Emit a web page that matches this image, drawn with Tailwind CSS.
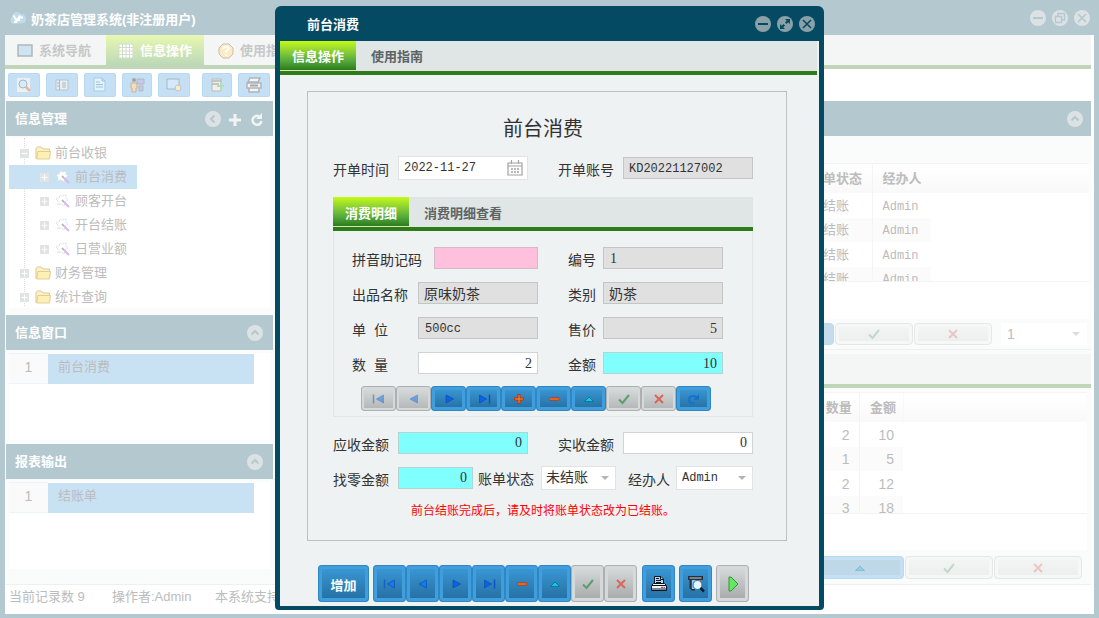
<!DOCTYPE html>
<html lang="zh-CN">
<head>
    <meta charset="UTF-8">
    <meta name="viewport" content="width=device-width, initial-scale=1.0">
    <title>奶茶店管理系统</title>
    <script src="https://cdn.jsdelivr.net/npm/@tailwindcss/browser@4"></script>
</head>
<body class="h-screen overflow-hidden bg-[#b4c8d0] font-['Liberation_Sans','Noto_Sans_CJK_SC',sans-serif] text-[13px] leading-5 text-[#333]">

    <!-- Icon sprite -->
    <svg class="hidden">
        <symbol id="i-min" viewBox="0 0 16 16"><circle cx="8" cy="8" r="8" fill="currentColor"/><path d="M3 8h10" class="stroke-(--hole)" stroke-width="2"/></symbol>
        <symbol id="i-max" viewBox="0 0 16 16"><circle cx="8" cy="8" r="8" fill="currentColor"/><path d="M4.500 11.500l7-7" class="stroke-(--hole)" stroke-width="2" stroke-dasharray="4 2"/><path d="M8 3h5v5zM3 8v5h5z" class="fill-(--hole)"/></symbol>
        <symbol id="i-restore" viewBox="0 0 16 16"><circle cx="8" cy="8" r="8" fill="currentColor"/><path d="M3.500 6.500h6v6h-6zM6 6V3.500h6.500v6.500H10" class="stroke-(--hole)" fill="none" stroke-width="1.400"/></symbol>
        <symbol id="i-close" viewBox="0 0 16 16"><circle cx="8" cy="8" r="8" fill="currentColor"/><path d="M4 4l8 8M12 4l-8 8" class="stroke-(--hole)" stroke-width="1.600"/></symbol>
        <symbol id="i-up" viewBox="0 0 16 16"><circle cx="8" cy="8" r="8" fill="currentColor"/><path d="M4.500 9.500L8 6l3.500 3.500" class="stroke-(--hole)" fill="none" stroke-width="2"/></symbol>
        <symbol id="i-left" viewBox="0 0 16 16"><circle cx="8" cy="8" r="8" fill="currentColor"/><path d="M9.500 4.500L6 8l3.500 3.500" class="stroke-(--hole)" fill="none" stroke-width="2"/></symbol>
        <symbol id="i-first" viewBox="0 0 14 12"><path d="M1.500 1.500v9" stroke="#1560c8" stroke-width="1.500"/><path d="M11.500 2v8L4.500 6z" fill="#1478f0" stroke="#0a50bc" stroke-width=".7"/></symbol>
        <symbol id="i-prev" viewBox="0 0 14 12"><path d="M10.500 2v8L3 6z" fill="#1478f0" stroke="#0a50bc" stroke-width=".7"/></symbol>
        <symbol id="i-next" viewBox="0 0 14 12"><path d="M4 2v8l7.500-4z" fill="#0c62e4" stroke="#0a4cb4" stroke-width=".7"/></symbol>
        <symbol id="i-last" viewBox="0 0 14 12"><path d="M12.500 1.500v9" stroke="#0c52c8" stroke-width="1.500"/><path d="M2.500 2v8l7-4z" fill="#0c62e4" stroke="#0a4cb4" stroke-width=".7"/></symbol>
        <symbol id="i-add" viewBox="0 0 14 12"><path d="M7 1v10M2 6h10" stroke="#c83204" stroke-width="3"/><path d="M7 2v8M3 6h8" stroke="#ff8a2a"/></symbol>
        <symbol id="i-del" viewBox="0 0 14 12"><path d="M2 6h10" stroke="#d42a00" stroke-width="3"/><path d="M2.500 6h9" stroke="#ff9a3a"/></symbol>
        <symbol id="i-edit" viewBox="0 0 14 12"><path d="M2.500 8.500L7 4l4.500 4.500z" fill="#10c8e0" stroke="#047c9c"/></symbol>
        <symbol id="i-ok" viewBox="0 0 14 12"><path d="M2 6.500l3.500 3.500L12 2" fill="none" stroke="#5a9e6e" stroke-width="2"/></symbol>
        <symbol id="i-no" viewBox="0 0 14 12"><path d="M3 2l8 8M11 2l-8 8" stroke="#d8665c" stroke-width="2"/></symbol>
        <symbol id="i-redo" viewBox="0 0 14 12"><path d="M7.500 10.500H5A3.800 3.800 0 0 1 5.500 3Q8 2.500 10 4.500" fill="none" stroke="#1272cc" stroke-width="2"/><path d="M12 1v6H6.500z" fill="#1272cc"/></symbol>
        <symbol id="i-print" viewBox="0 0 18 18"><path d="M4.500 9V1.500H11L13.500 4v5" fill="#b4dcf8" stroke="#0a1420"/><path d="M6 3.500h3M6 5.500h5M6 7.500h5M10.500 1.500V4.500h3" fill="none" stroke="#0a1420"/><path d="M3.500 8.500h11l2 2v5h-15v-5z" fill="#eef4fa" stroke="#0a1420"/><path d="M2 10.500h14M2 14h14" stroke="#0a1420" stroke-width="1.200"/><path d="M11 12.300h2" stroke="#e02020"/><path d="M13.500 12.300h1.500" stroke="#2060e0"/></symbol>
        <symbol id="i-preview" viewBox="0 0 18 18"><path d="M1 1h15v4H1z" fill="#26303a"/><path d="M2.500 3h12" stroke="#c8d8e4"/><path d="M3.500 5v9M4 14.500h4" stroke="#26303a" stroke-width="2"/><path d="M5 5h8v9H5z" fill="#8cc6ee"/><path d="M14 5v4" stroke="#c46038" stroke-width="2"/><circle cx="10.500" cy="10" r="4.500" fill="#e4f6ff" stroke="#2a6c9c"/><path d="M13.500 13l3.500 3.500" stroke="#0a1c30" stroke-width="2.500"/></symbol>
        <symbol id="i-run" viewBox="0 0 18 18"><path d="M5 2v14h2l7-7-7-7z" fill="#62e862" stroke="#3a9038"/></symbol>
        <symbol id="i-cal" viewBox="0 0 16 16"><path d="M1 3h14v12H1zM1 6h14M4.500 0v4M11.500 0v4" fill="none" stroke="#a2a2a2" stroke-width="1.200"/><path d="M4 9h2m1 0h2m1 0h2M4 12h2m1 0h2m1 0h2" stroke="#a2a2a2" stroke-width="1.500"/></symbol>
        <symbol id="i-caret" viewBox="0 0 10 6"><path d="M1 1h8L5 5z" fill="currentColor"/></symbol>
        <symbol id="i-folder" viewBox="0 0 16 14"><path d="M1 3l1.500-2h4L8 3h6.500v9.500H1z" fill="#fff3c4" stroke="#dcc690"/><path d="M3 5.500h12.500l-1 7.500H1.500z" fill="#fdf0b4" stroke="#e2cd94"/></symbol>
        <symbol id="i-wand" viewBox="0 0 16 16"><path d="M1 6l3-1 1-3 3 1 3-1v3l2 2-3 2-1 4-3-2-3 1 0-4z" fill="#fff" stroke="#dcdcdc" stroke-dasharray="2 1"/><path d="M7 7l2 2" stroke="#bbb" stroke-width="2"/><path d="M9 9l5 5" stroke="#ddb4f4" stroke-width="2"/></symbol>
        <symbol id="i-plus" viewBox="0 0 9 9"><path d="M0 0h9v9H0z" fill="#e2e4e4"/><path d="M1.500 4.500h6M4.500 1.500v6" stroke="#fff"/></symbol>
        <symbol id="i-minus" viewBox="0 0 9 9"><path d="M0 0h9v9H0z" fill="#e2e4e4"/><path d="M1.500 4.500h6" stroke="#fff"/></symbol>
    </svg>

    <!-- Main window -->
    <div class="flex h-full flex-col px-[5px] pb-1 [--hole:#b4c8d0]">
        <header class="flex h-[35px] shrink-0 items-center gap-1 pr-1 pl-1 font-bold text-white">
            <svg class="h-4 w-[18px]" viewBox="0 0 18 16"><path d="M4 14a4 4 0 0 1-1-7 5 5 0 0 1 9-3 5 5 0 0 1 3 9z" fill="#bedcea"/><path d="M4.500 5.500l3 5M11 5.500L7 12H5M10 8v3M11 7.500h3" fill="none" stroke="#fff" stroke-width="2"/></svg>
            <h1 class="grow pt-1">奶茶店管理系统(非注册用户)</h1>
            <div class="flex gap-1.5 text-[#dce2e4]">
                <button aria-label="最小化"><svg class="size-4"><use href="#i-min"/></svg></button>
                <button aria-label="还原"><svg class="size-4"><use href="#i-restore"/></svg></button>
                <button aria-label="关闭"><svg class="size-4"><use href="#i-close"/></svg></button>
            </div>
        </header>

        <div class="flex min-h-0 grow flex-col bg-white pr-[3px]">
            <nav class="flex h-[34px] shrink-0 border-b-4 border-[#c0d6b8] bg-[#f4f6f6] font-bold text-[#c6c8c8]">
                <button class="flex w-[101px] items-center gap-1.5 pt-0.5 pl-3"><svg class="h-4 w-[16px]" viewBox="0 0 16 16"><path d="M1 2h14v11H1z" fill="#cfe4f2" stroke="#b0b6ba" stroke-width="1.500"/></svg>系统导航</button>
                <button class="flex w-[98px] items-center gap-1.5 bg-linear-to-b from-[#e8f8b0] to-[#bcd8b8] pt-0.5 pl-3 text-white"><svg class="size-4" viewBox="0 0 16 16"><path d="M1 1h14v14H1z" fill="#fff"/><path d="M1 4.500h14M1 8h14M1 11.500h14M4.500 1v14M8 1v14M11.500 1v14M1 1h14v14H1z" fill="none" stroke="#d2dccc"/></svg>信息操作</button>
                <button class="flex items-center gap-1.5 pt-0.5 pl-3.5"><svg class="size-4" viewBox="0 0 16 16"><path d="M5 1h6l4 4v6l-4 4H5l-4-4V5z" fill="#fcecc4" stroke="#c8bcb0"/><path d="M5.500 6q0-2.500 2.500-2.500T10.500 6Q10 7.500 8 8v2M8 11.500v1.500" fill="none" stroke="#fff" stroke-width="2"/></svg>使用指南</button>
            </nav>

            <div class="flex h-8 shrink-0 items-center gap-1.5 pl-[3px]">
                <button aria-label="查询" class="flex h-6 w-8 items-center justify-center rounded-xs border border-[#b8daf0] bg-[#c5e0f4]"><svg class="size-4" viewBox="0 0 16 16"><path d="M1 1h13v14H1z" fill="#eef0ee"/><circle cx="7" cy="7" r="4" fill="#d4ecfc" stroke="#a6b6c0"/><path d="M10 10l4 4" stroke="#e8b898" stroke-width="2.500"/></svg></button>
                <button aria-label="列表" class="flex h-6 w-8 items-center justify-center rounded-xs border border-[#b8daf0] bg-[#c5e0f4]"><svg class="size-4" viewBox="0 0 16 16"><path d="M2 3h12v10H2z" fill="#e8eef2" stroke="#b4c2cc"/><path d="M5.500 3v10M8 6h4M8 8h4M8 10h4M3 6h2M3 9h2" stroke="#a8bac8"/></svg></button>
                <button aria-label="文档" class="flex h-6 w-8 items-center justify-center rounded-xs border border-[#b8daf0] bg-[#c5e0f4]"><svg class="size-4" viewBox="0 0 16 16"><path d="M2 1h8l3 3v10H2z" fill="#e4f2fc" stroke="#a8cce4"/><path d="M4 5h4M4 7.500h7M4 10h7M10 1v3h3" fill="none" stroke="#9cc0dc"/></svg></button>
                <button aria-label="用户" class="flex h-6 w-[30px] items-center justify-center rounded-xs border border-[#b8daf0] bg-[#c5e0f4]"><svg class="size-4" viewBox="0 0 16 16"><circle cx="5" cy="3" r="2" fill="#a8a49c"/><path d="M2 6h6v5H7v4H3v-4H2z" fill="#f4dcbc" stroke="#c4b49c"/><path d="M8 2h7v5H8zM10 9h4v5h-4z" fill="#c8c8ec" stroke="#b4b8bc"/></svg></button>
                <button aria-label="窗口" class="flex h-6 w-8 items-center justify-center rounded-xs border border-[#b8daf0] bg-[#c5e0f4]"><svg class="size-4" viewBox="0 0 16 16"><path d="M1 2h12v10H1z" fill="#d4eafa" stroke="#a8b8c0"/><circle cx="12" cy="11" r="3" fill="#f0f0c4" stroke="#d0b8d8"/></svg></button>
                <button aria-label="导出" class="ml-1.5 flex h-6 w-[30px] items-center justify-center rounded-xs border border-[#b8daf0] bg-[#c5e0f4]"><svg class="size-4" viewBox="0 0 16 16"><path d="M3 2h9v12H3z" fill="#f0f0ea" stroke="#b8bcb8"/><path d="M3 4h9M3 7h7" stroke="#b4b8b4" stroke-width="1.500"/><path d="M8 9h7M12 6v6" stroke="#b4dcb4" stroke-width="2"/></svg></button>
                <button aria-label="打印" class="flex h-6 w-8 items-center justify-center rounded-xs border border-[#b8daf0] bg-[#c5e0f4]"><svg class="size-4" viewBox="0 0 16 16"><path d="M4 1h10l-2 4H2zM1 6h14v5H1zM3 11h10v4H3z" fill="#f4f4f4" stroke="#b0b4b8" stroke-width="1.500"/><path d="M4 8.500h8" stroke="#a4a8ac" stroke-width="2"/></svg></button>
            </div>

            <div class="flex min-h-0 grow bg-[#fafcfc]">
                <!-- Left panels -->
                <aside class="flex w-[268px] shrink-0 flex-col pl-px text-[#bcbcbc]">
                    <h2 class="flex h-[35px] items-center gap-1.5 bg-[#b4c8d0] pr-2 pl-[9px] font-bold text-white">
                        <span class="grow">信息管理</span>
                        <button aria-label="收起" class="text-[#dce2e4]"><svg class="size-4"><use href="#i-left"/></svg></button>
                        <button aria-label="展开全部"><svg class="size-4" viewBox="0 0 16 16"><path d="M8 3v12M2 9h12" stroke="#f0f4f4" stroke-width="3"/></svg></button>
                        <button aria-label="刷新"><svg class="size-4" viewBox="0 0 16 16"><path d="M10.500 5.500A4.500 4.500 0 1 0 12.500 10" fill="none" stroke="#f0f4f4" stroke-width="2.500"/><path d="M13 2v6H7z" fill="#f0f4f4"/></svg></button>
                    </h2>
                    <ul class="relative mx-[3px] mt-0.5 h-[170px] bg-white pt-[3px] *:h-6">
                        <li class="absolute top-0 left-[15px] h-[168px]! border-l border-dotted border-[#dcdcdc]"></li>
                        <li class="relative flex items-center pl-[11px]"><svg class="mr-1.5 size-[9px]"><use href="#i-minus"/></svg><svg class="mr-1 h-[14px] w-4"><use href="#i-folder"/></svg>前台收银</li>
                        <li class="relative flex w-32 items-center bg-[#c8e2f4] pl-[31px]"><svg class="mr-1.5 size-[9px]"><use href="#i-plus"/></svg><svg class="mr-1 size-4"><use href="#i-wand"/></svg>前台消费</li>
                        <li class="flex items-center pl-[31px]"><svg class="mr-1.5 size-[9px]"><use href="#i-plus"/></svg><svg class="mr-1 size-4"><use href="#i-wand"/></svg>顾客开台</li>
                        <li class="flex items-center pl-[31px]"><svg class="mr-1.5 size-[9px]"><use href="#i-plus"/></svg><svg class="mr-1 size-4"><use href="#i-wand"/></svg>开台结账</li>
                        <li class="flex items-center pl-[31px]"><svg class="mr-1.5 size-[9px]"><use href="#i-plus"/></svg><svg class="mr-1 size-4"><use href="#i-wand"/></svg>日营业额</li>
                        <li class="relative flex items-center pl-[11px]"><svg class="mr-1.5 size-[9px]"><use href="#i-plus"/></svg><svg class="mr-1 h-[14px] w-4"><use href="#i-folder"/></svg>财务管理</li>
                        <li class="relative flex items-center pl-[11px]"><svg class="mr-1.5 size-[9px]"><use href="#i-plus"/></svg><svg class="mr-1 h-[14px] w-4"><use href="#i-folder"/></svg>统计查询</li>
                    </ul>

                    <h2 class="mt-[7px] flex h-[35px] items-center justify-between bg-[#b4c8d0] pr-[10px] pl-[9px] font-bold text-white">信息窗口<button aria-label="折叠" class="text-[#dce2e4]"><svg class="size-4"><use href="#i-up"/></svg></button></h2>
                    <div class="mx-[3px] mt-[3px] h-[87px] bg-white">
                        <table class="h-[31px]"><tbody><tr><td class="w-[39px] border-y border-[#ecf4fa] bg-[#fafafa] pb-1 text-center text-[14px]">1</td><td class="w-[206px] bg-[#c8e2f4] pb-1 pl-2.5">前台消费</td></tr></tbody></table>
                    </div>

                    <h2 class="mt-1 flex h-[35px] items-center justify-between bg-[#b4c8d0] pr-[10px] pl-[9px] font-bold text-white">报表输出<button aria-label="折叠" class="text-[#dce2e4]"><svg class="size-4"><use href="#i-up"/></svg></button></h2>
                    <div class="mx-[3px] mt-[3px] h-[87px] bg-white">
                        <table class="h-[31px]"><tbody><tr><td class="w-[39px] border-y border-[#ecf4fa] bg-[#fafafa] pb-1 text-center text-[14px]">1</td><td class="w-[206px] bg-[#c8e2f4] pb-1 pl-2.5">结账单</td></tr></tbody></table>
                    </div>
                </aside>

                <!-- Right side: bill list and detail list -->
                <main class="ml-[5px] flex min-w-0 grow flex-col text-[#bcbcbc]">
                    <div class="flex h-[35px] shrink-0 items-center justify-end bg-[#b4c8d0] pr-2"><button aria-label="折叠" class="text-[#dce2e4]"><svg class="size-4"><use href="#i-up"/></svg></button></div>
                    <div class="mt-[27px] mr-0.5 h-[156px] shrink-0 bg-white">
                        <div class="h-[119px] overflow-hidden border-y border-[#f2f4f4]">
                            <table class="w-full bg-[linear-gradient(#fff,#f9f9f9_29px,#fff_29px)] text-left">
                                <thead><tr class="h-[29px]"><th class="w-[522px]"></th><th class="w-[72px] border-r border-[#f4f4f4] pl-2.5 whitespace-nowrap">账单状态</th><th class="w-[59px] pl-2.5 whitespace-nowrap">经办人</th><th></th></tr></thead>
                                <tbody class="*:odd:h-[25px] *:even:h-6 *:even:bg-[#fbfbfb]">
                                    <tr><td></td><td class="border-r border-[#f4f4f4] pl-2.5">已结账</td><td class="pt-0.5 pl-2.5 font-['Liberation_Mono',monospace] text-[12px]">Admin</td><td class="bg-white"></td></tr>
                                    <tr><td></td><td class="border-r border-[#f4f4f4] pl-2.5">已结账</td><td class="pt-0.5 pl-2.5 font-['Liberation_Mono',monospace] text-[12px]">Admin</td><td class="bg-white"></td></tr>
                                    <tr><td></td><td class="border-r border-[#f4f4f4] pl-2.5">已结账</td><td class="pt-0.5 pl-2.5 font-['Liberation_Mono',monospace] text-[12px]">Admin</td><td class="bg-white"></td></tr>
                                    <tr><td></td><td class="border-r border-[#f4f4f4] pl-2.5">已结账</td><td class="pt-0.5 pl-2.5 font-['Liberation_Mono',monospace] text-[12px]">Admin</td><td class="bg-white"></td></tr>
                                </tbody>
                            </table>
                        </div>
                    </div>
                    <div class="flex h-[31px] shrink-0 items-center justify-end gap-px border-b border-[#eef0f0] pr-1">
                        <button aria-label="编辑" class="h-[22px] w-20 rounded-sm border border-[#b8daf0] bg-[#c4dcec]"></button>
                        <button aria-label="保存" class="flex h-[22px] w-[78px] items-center justify-center rounded-sm border border-[#e4e8e8] bg-linear-to-b from-[#f4f6f6] to-[#eceeee] inset-ring-3 inset-ring-[#f6f8f8]"><svg class="h-3 w-3.5 opacity-30"><use href="#i-ok"/></svg></button>
                        <button aria-label="取消" class="flex h-[22px] w-[78px] items-center justify-center rounded-sm border border-[#e4e8e8] bg-linear-to-b from-[#f4f6f6] to-[#eceeee] inset-ring-3 inset-ring-[#f6f8f8]"><svg class="h-3 w-3.5 opacity-30"><use href="#i-no"/></svg></button>
                        <div class="relative ml-2 h-[22px] w-[86px] bg-white">
                            <select aria-label="页码" class="h-full w-full appearance-none pl-1.5 text-[14px]"><option>1</option></select>
                            <svg class="pointer-events-none absolute top-2 right-1.5 h-1.5 w-2.5 text-[#dcdcdc]"><use href="#i-caret"/></svg>
                        </div>
                    </div>
                    <div class="mt-1 h-[34px] shrink-0 border-b-4 border-[#c0d6b8] bg-[#f4f6f6]"></div>
                    <div class="mt-1 mr-1 h-[158px] shrink-0 bg-white">
                        <div class="h-[122px] overflow-hidden border-y border-[#f2f4f4]">
                            <table class="w-full bg-[linear-gradient(#fff,#f9f9f9_29px,#fff_29px)] text-[14px]">
                                <thead><tr class="h-[29px] text-[13px]"><th class="w-[537px]"></th><th class="w-11 border-r border-[#f4f4f4] pl-1 whitespace-nowrap">数量</th><th class="w-11 border-r border-[#f8f8f8] pl-1 whitespace-nowrap">金额</th><th></th></tr></thead>
                                <tbody class="*:odd:h-[25px] *:even:h-6 *:even:bg-[#fbfbfb]">
                                    <tr><td></td><td class="border-r border-[#f4f4f4] pr-[9px] text-right">2</td><td class="pr-[9px] text-right">10</td><td class="bg-white"></td></tr>
                                    <tr><td></td><td class="border-r border-[#f4f4f4] pr-[9px] text-right">1</td><td class="pr-[9px] text-right">5</td><td class="bg-white"></td></tr>
                                    <tr><td></td><td class="border-r border-[#f4f4f4] pr-[9px] text-right">2</td><td class="pr-[9px] text-right">12</td><td class="bg-white"></td></tr>
                                    <tr><td></td><td class="border-r border-[#f4f4f4] pr-[9px] text-right">3</td><td class="pr-[9px] text-right">18</td><td class="bg-white"></td></tr>
                                </tbody>
                            </table>
                        </div>
                    </div>
                    <div class="flex grow items-center justify-end gap-px pt-px pr-[9px]">
                        <button aria-label="编辑" class="flex h-[23px] w-[88px] items-center justify-center rounded-sm border border-[#b8daf0] bg-[#bfd8e8] inset-ring-3 inset-ring-[#c5e0f4]"><svg class="h-3 w-3.5 opacity-30"><use href="#i-edit"/></svg></button>
                        <button aria-label="保存" class="flex h-[23px] w-[88px] items-center justify-center rounded-sm border border-[#e4e8e8] bg-linear-to-b from-[#f4f6f6] to-[#eceeee] inset-ring-3 inset-ring-[#f6f8f8]"><svg class="h-3 w-3.5 opacity-30"><use href="#i-ok"/></svg></button>
                        <button aria-label="取消" class="flex h-[23px] w-[88px] items-center justify-center rounded-sm border border-[#e4e8e8] bg-linear-to-b from-[#f4f6f6] to-[#eceeee] inset-ring-3 inset-ring-[#f6f8f8]"><svg class="h-3 w-3.5 opacity-30"><use href="#i-no"/></svg></button>
                    </div>
                </main>
            </div>

            <footer class="flex h-[30px] shrink-0 border-t border-[#eef0f0] pt-0.5 pl-1 whitespace-nowrap text-[#bcbcbc]">
                <span class="w-[103px]">当前记录数 9</span>
                <span class="w-[103px]">操作者:Admin</span>
                <span>本系统支持</span>
            </footer>
        </div>
    </div>

    <!-- Dialog -->
    <div class="absolute inset-0 flex items-start justify-center pt-1.5 [--hole:#054a63]">
        <section class="flex w-[549px] flex-col rounded-t-md rounded-b-sm bg-[#054a63] px-[5px] pb-1">
            <header class="flex h-[35px] items-center gap-1.5 pr-1 pl-[27px] font-bold text-white">
                <h2 class="grow pt-0.5">前台消费</h2>
                <button aria-label="最小化" class="text-[#8ba1a8]"><svg class="size-4"><use href="#i-min"/></svg></button>
                <button aria-label="最大化" class="text-[#8ba1a8]"><svg class="size-4"><use href="#i-max"/></svg></button>
                <button aria-label="关闭" class="text-[#8ba1a8]"><svg class="size-4"><use href="#i-close"/></svg></button>
            </header>

            <div class="bg-[#eef2f3] pr-0.5 pb-1">
                <nav class="flex h-[34px] border-b-4 border-[#2d7b1a] bg-[#e0e5e5] font-bold text-[#5c6464]">
                    <button class="w-[76px] border-b border-[#d8e8b0] bg-linear-to-b from-[#c4fa10] via-[#52a83c] via-70% to-[#2d7b1a] pt-0.5 text-white">信息操作</button>
                    <button class="px-[15px] pt-0.5">使用指南</button>
                </nav>

                <form class="mt-4 mr-[30px] ml-[27px] border border-[#bcc0c2] pr-[33px] pb-[18px] pl-[25px] font-['Liberation_Mono','Noto_Sans_CJK_SC',monospace] text-[14px]">
                    <h3 class="mt-6 mb-[11px] text-center text-[20px] leading-[30px]">前台消费</h3>

                    <div class="flex h-[22px] items-center">
                        <label for="bill-date" class="w-[65px] pt-1.5">开单时间</label>
                        <div class="flex h-6 w-[130px] items-center border border-[#e2e4e4] bg-white pr-1">
                            <input id="bill-date" value="2022-11-27" class="min-w-0 grow pl-[5px] text-[12px] outline-none">
                            <svg class="size-4 shrink-0"><use href="#i-cal"/></svg>
                        </div>
                        <label for="bill-no" class="ml-auto pt-1.5 pr-[9px]">开单账号</label>
                        <input id="bill-no" readonly value="KD20221127002" class="h-[22px] w-[130px] border border-[#c4c6c6] bg-[#e0e0e0] pt-0.5 pl-[5px] text-[12px]">
                    </div>

                    <div class="mt-[18px]">
                        <div class="flex h-[34px] border-b-4 border-[#2d7b1a] bg-[#e0e5e5] font-['Noto_Sans_CJK_SC',sans-serif] text-[13px] font-bold text-[#5c6464]">
                            <button type="button" class="w-[76px] border-b border-[#d8e8b0] bg-linear-to-b from-[#c4fa10] via-[#52a83c] via-70% to-[#2d7b1a] pt-0.5 text-white">消费明细</button>
                            <button type="button" class="px-[15px] pt-0.5">消费明细查看</button>
                        </div>
                        <div class="border border-t-0 border-[#e2e6e7] pt-4 pb-[5px]">
                            <div class="grid grid-cols-[186px_155px] gap-x-[30px] gap-y-[13px] pl-[18px] *:flex *:h-[22px] *:items-center *:justify-between">
                                <div><label for="code" class="pt-1.5">拼音助记码</label><input id="code" class="h-[22px] w-[104px] border border-[#d8b8c8] bg-[#ffc0de] px-1.5 text-[12px]"></div>
                                <div><label for="no" class="pt-1.5">编号</label><input id="no" readonly value="1" class="h-[22px] w-[120px] border border-[#c4c6c6] bg-[#e0e0e0] px-1.5 pt-0.5 font-['Liberation_Serif',serif]"></div>
                                <div><label for="name" class="pt-1.5">出品名称</label><input id="name" readonly value="原味奶茶" class="h-[22px] w-[120px] border border-[#c4c6c6] bg-[#e0e0e0] px-[5px]"></div>
                                <div><label for="kind" class="pt-1.5">类别</label><input id="kind" readonly value="奶茶" class="h-[22px] w-[120px] border border-[#c4c6c6] bg-[#e0e0e0] px-[5px]"></div>
                                <div><label for="unit" class="pt-1.5">单<span class="inline-block w-2"></span>位</label><input id="unit" readonly value="500cc" class="h-[22px] w-[120px] border border-[#c4c6c6] bg-[#e0e0e0] px-1.5 pt-0.5 text-[12px]"></div>
                                <div><label for="price" class="pt-1.5">售价</label><input id="price" readonly value="5" class="h-[22px] w-[120px] border border-[#c4c6c6] bg-[#e0e0e0] px-[5px] pt-0.5 text-right font-['Liberation_Serif',serif]"></div>
                                <div><label for="qty" class="pt-1.5">数<span class="inline-block w-2"></span>量</label><input id="qty" value="2" class="h-[22px] w-[120px] border border-[#d0d4d4] bg-white px-[5px] pt-0.5 text-right font-['Liberation_Serif',serif]"></div>
                                <div><label for="sum" class="pt-1.5">金额</label><input id="sum" readonly value="10" class="h-[22px] w-[120px] border border-[#b4d4d4] bg-[#80ffff] px-[5px] pt-0.5 text-right font-['Liberation_Serif',serif]"></div>
                            </div>
                            <div class="mt-3 flex pl-[27px] *:flex *:h-[25px] *:w-[35px] *:items-center *:justify-center *:rounded-[3px] *:border">
                                <button type="button" aria-label="首条" disabled class="border-[#acb0b2] bg-linear-to-b from-[#dadddd] to-[#b2b5b5] inset-ring-2 inset-ring-[#d6d9d9]"><svg class="h-3 w-3.5 opacity-50"><use href="#i-first"/></svg></button>
                                <button type="button" aria-label="上一条" disabled class="border-[#acb0b2] bg-linear-to-b from-[#dadddd] to-[#b2b5b5] inset-ring-2 inset-ring-[#d6d9d9]"><svg class="h-3 w-3.5 opacity-50"><use href="#i-prev"/></svg></button>
                                <button type="button" aria-label="下一条" class="border-[#2f86c2] bg-linear-to-b from-[#3c9ad8] to-[#246ea0] inset-ring-3 inset-ring-[#409edc]"><svg class="h-3 w-3.5"><use href="#i-next"/></svg></button>
                                <button type="button" aria-label="末条" class="border-[#2f86c2] bg-linear-to-b from-[#3c9ad8] to-[#246ea0] inset-ring-3 inset-ring-[#409edc]"><svg class="h-3 w-3.5"><use href="#i-last"/></svg></button>
                                <button type="button" aria-label="新增" class="border-[#2f86c2] bg-linear-to-b from-[#3c9ad8] to-[#246ea0] inset-ring-3 inset-ring-[#409edc]"><svg class="h-3 w-3.5"><use href="#i-add"/></svg></button>
                                <button type="button" aria-label="删除" class="border-[#2f86c2] bg-linear-to-b from-[#3c9ad8] to-[#246ea0] inset-ring-3 inset-ring-[#409edc]"><svg class="h-3 w-3.5"><use href="#i-del"/></svg></button>
                                <button type="button" aria-label="编辑" class="border-[#2f86c2] bg-linear-to-b from-[#3c9ad8] to-[#246ea0] inset-ring-3 inset-ring-[#409edc]"><svg class="h-3 w-3.5"><use href="#i-edit"/></svg></button>
                                <button type="button" aria-label="保存" disabled class="border-[#acb0b2] bg-linear-to-b from-[#dadddd] to-[#b2b5b5] inset-ring-2 inset-ring-[#d6d9d9]"><svg class="h-3 w-3.5"><use href="#i-ok"/></svg></button>
                                <button type="button" aria-label="取消" disabled class="border-[#acb0b2] bg-linear-to-b from-[#dadddd] to-[#b2b5b5] inset-ring-2 inset-ring-[#d6d9d9]"><svg class="h-3 w-3.5"><use href="#i-no"/></svg></button>
                                <button type="button" aria-label="刷新" class="border-[#2f86c2] bg-linear-to-b from-[#3c9ad8] to-[#246ea0] inset-ring-3 inset-ring-[#409edc]"><svg class="h-3 w-3.5"><use href="#i-redo"/></svg></button>
                            </div>
                        </div>
                    </div>

                    <div class="mt-[15px] flex h-[22px] items-center">
                        <label for="due" class="w-[65px] pt-1.5">应收金额</label>
                        <input id="due" readonly value="0" class="h-[22px] w-[130px] border border-[#b4d4d4] bg-[#80ffff] px-[5px] text-right font-['Liberation_Serif',serif]">
                        <label for="paid" class="ml-auto pt-1.5 pr-[9px]">实收金额</label>
                        <input id="paid" value="0" class="h-[22px] w-[130px] border border-[#d0d4d4] bg-white px-[5px] text-right font-['Liberation_Serif',serif]">
                    </div>
                    <div class="mt-[13px] flex h-[22px] items-center">
                        <label for="change" class="w-[65px] pt-1.5">找零金额</label>
                        <input id="change" readonly value="0" class="h-[22px] w-[75px] border border-[#b4d4d4] bg-[#80ffff] px-[5px] text-right font-['Liberation_Serif',serif]">
                        <label for="status" class="pt-1 pr-[7px] pl-[5px]">账单状态</label>
                        <div class="relative h-6 w-[75px] border border-[#e2e4e4] bg-white">
                            <select id="status" class="h-full w-full appearance-none pl-1"><option>未结账</option></select>
                            <svg class="pointer-events-none absolute top-2 right-[5px] h-1.5 w-2.5 text-[#b4b4b4]"><use href="#i-caret"/></svg>
                        </div>
                        <label for="clerk" class="ml-auto pt-1.5 pr-1.5">经办人</label>
                        <div class="relative h-6 w-[77px] border border-[#e2e4e4] bg-white">
                            <select id="clerk" class="h-full w-full appearance-none pl-[5px] text-[12px]"><option>Admin</option></select>
                            <svg class="pointer-events-none absolute top-2 right-[5px] h-1.5 w-2.5 text-[#b4b4b4]"><use href="#i-caret"/></svg>
                        </div>
                    </div>
                    <p class="mt-[13px] pl-[78px] text-[12px] whitespace-nowrap text-[#f00]">前台结账完成后，请及时将账单状态改为已结账。</p>
                </form>

                <div class="mt-6 flex pl-[38px] *:flex *:h-[37px] *:w-[33px] *:items-center *:justify-center *:rounded-[3px] *:border">
                    <button class="mr-1 w-[51px]! border-[#2f86c2] bg-linear-to-b from-[#3c9ad8] to-[#246ea0] pt-1 font-bold text-white inset-ring-3 inset-ring-[#409edc]">增加</button>
                    <button aria-label="首条" class="border-[#2f86c2] bg-linear-to-b from-[#3c9ad8] to-[#246ea0] inset-ring-3 inset-ring-[#409edc]"><svg class="h-3 w-3.5"><use href="#i-first"/></svg></button>
                    <button aria-label="上一条" class="border-[#2f86c2] bg-linear-to-b from-[#3c9ad8] to-[#246ea0] inset-ring-3 inset-ring-[#409edc]"><svg class="h-3 w-3.5"><use href="#i-prev"/></svg></button>
                    <button aria-label="下一条" class="border-[#2f86c2] bg-linear-to-b from-[#3c9ad8] to-[#246ea0] inset-ring-3 inset-ring-[#409edc]"><svg class="h-3 w-3.5"><use href="#i-next"/></svg></button>
                    <button aria-label="末条" class="border-[#2f86c2] bg-linear-to-b from-[#3c9ad8] to-[#246ea0] inset-ring-3 inset-ring-[#409edc]"><svg class="h-3 w-3.5"><use href="#i-last"/></svg></button>
                    <button aria-label="删除" class="border-[#2f86c2] bg-linear-to-b from-[#3c9ad8] to-[#246ea0] inset-ring-3 inset-ring-[#409edc]"><svg class="h-3 w-3.5"><use href="#i-del"/></svg></button>
                    <button aria-label="编辑" class="border-[#2f86c2] bg-linear-to-b from-[#3c9ad8] to-[#246ea0] inset-ring-3 inset-ring-[#409edc]"><svg class="h-3 w-3.5"><use href="#i-edit"/></svg></button>
                    <button aria-label="保存" disabled class="border-[#acb0b2] bg-linear-to-b from-[#dadddd] to-[#a4a8a8] inset-ring-3 inset-ring-[#d6d9d9]"><svg class="h-3 w-3.5"><use href="#i-ok"/></svg></button>
                    <button aria-label="取消" disabled class="border-[#acb0b2] bg-linear-to-b from-[#dadddd] to-[#a4a8a8] inset-ring-3 inset-ring-[#d6d9d9]"><svg class="h-3 w-3.5"><use href="#i-no"/></svg></button>
                    <button aria-label="打印" class="ml-[5px] border-[#2f86c2] bg-linear-to-b from-[#3c9ad8] to-[#246ea0] inset-ring-3 inset-ring-[#409edc]"><svg class="size-[18px]"><use href="#i-print"/></svg></button>
                    <button aria-label="预览" class="ml-1 border-[#2f86c2] bg-linear-to-b from-[#3c9ad8] to-[#246ea0] inset-ring-3 inset-ring-[#409edc]"><svg class="size-[18px]"><use href="#i-preview"/></svg></button>
                    <button aria-label="执行" class="ml-1 border-[#acb0b2] bg-linear-to-b from-[#dadddd] to-[#a4a8a8] inset-ring-3 inset-ring-[#d6d9d9]"><svg class="size-[18px]"><use href="#i-run"/></svg></button>
                </div>
            </div>
        </section>
    </div>
</body>
</html>
